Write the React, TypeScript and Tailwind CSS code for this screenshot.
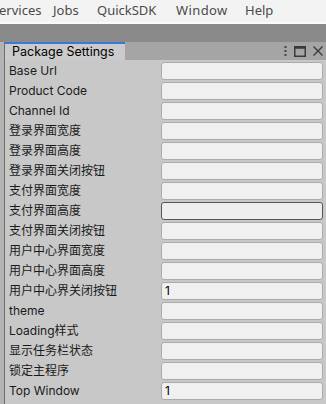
import React from "react";

const rows: { label: string; value?: string; focus?: boolean }[] = [
  { label: "Base Url" },
  { label: "Product Code" },
  { label: "Channel Id" },
  { label: "登录界面宽度" },
  { label: "登录界面高度" },
  { label: "登录界面关闭按钮" },
  { label: "支付界面宽度" },
  { label: "支付界面高度", focus: true },
  { label: "支付界面关闭按钮" },
  { label: "用户中心界面宽度" },
  { label: "用户中心界面高度" },
  { label: "用户中心界关闭按钮", value: "1" },
  { label: "theme" },
  { label: "Loading样式" },
  { label: "显示任务栏状态" },
  { label: "锁定主程序" },
  { label: "Top Window", value: "1" },
];

export default function App() {
  return (
    <div
      className="w-[326px] h-[404px] overflow-hidden bg-[#c8c8c8] flex flex-col"
      style={{ fontFamily: 'Inter, "Noto Sans CJK SC", sans-serif' }}
    >
      <div
        className="h-[22px] bg-[#f3f3f3] flex items-center text-[13px] text-[#4a4a4a] shrink-0 whitespace-nowrap"
        style={{ fontFamily: '"Noto Sans", "Noto Sans CJK SC", sans-serif' }}
      >
        <span className="w-[54px] -ml-[1px] shrink-0">ervices</span>
        <span className="w-[44px] shrink-0">Jobs</span>
        <span className="w-[79px] shrink-0">QuickSDK</span>
        <span className="w-[69px] shrink-0 tracking-[0.4px]">Window</span>
        <span className="shrink-0">Help</span>
      </div>
      <div className="h-[2px] bg-[#fbfbfb] shrink-0" />
      <div className="h-[18px] bg-[#8a8a8a] shrink-0" />
      <div className="flex flex-1 min-h-0">
        <div className="w-[5px] bg-[#b4b4b4] border-r border-[#6e6e6e] shrink-0" />
        <div className="flex-1 flex flex-col">
          <div className="h-[18px] bg-[#a5a5a5] flex items-stretch shrink-0">
            <div className="w-[120px] bg-[#cbcbcb] border-t-2 border-[#3a79d8] flex items-center pl-[7px] text-[12.5px] text-black">
              Package Settings
            </div>
            <div className="flex-1 flex items-center justify-end gap-[7px] pr-[3px]">
              <svg width="3" height="10" viewBox="0 0 3 10">
                <rect x="0.5" y="0" width="2" height="2" fill="#444" />
                <rect x="0.5" y="4" width="2" height="2" fill="#444" />
                <rect x="0.5" y="8" width="2" height="2" fill="#444" />
              </svg>
              <svg width="12" height="11" viewBox="0 0 12 11">
                <rect x="0.75" y="0.75" width="10.5" height="9.5" fill="none" stroke="#3a3a3a" strokeWidth="1.5" />
                <rect x="0.75" y="0.75" width="10.5" height="2" fill="#3a3a3a" />
              </svg>
              <svg width="10" height="10" viewBox="0 0 10 10">
                <path d="M0.5 0.5 L9.5 9.5 M9.5 0.5 L0.5 9.5" stroke="#3a3a3a" strokeWidth="1.4" />
              </svg>
            </div>
          </div>
          <div className="flex flex-col pt-[1px]">
            {rows.map((r) => (
              <div key={r.label} className="h-[20px] flex items-center">
                <span className="pl-[4px] text-[12px] text-[#1a1a1a] flex-1 whitespace-nowrap">
                  {r.label}
                </span>
                <div
                  className={
                    r.focus
                      ? "w-[162px] h-[18px] mr-[3px] rounded-[3px] border border-[#555555] bg-[#eeeeee] text-[12px] text-black flex items-center pl-[3px]"
                      : "w-[162px] h-[18px] mr-[3px] rounded-[3px] border border-[#ababab] bg-[#f0f0f0] text-[12px] text-black flex items-center pl-[3px]"
                  }
                >
                  {r.value ?? ""}
                </div>
              </div>
            ))}
          </div>
        </div>
      </div>
    </div>
  );
}
